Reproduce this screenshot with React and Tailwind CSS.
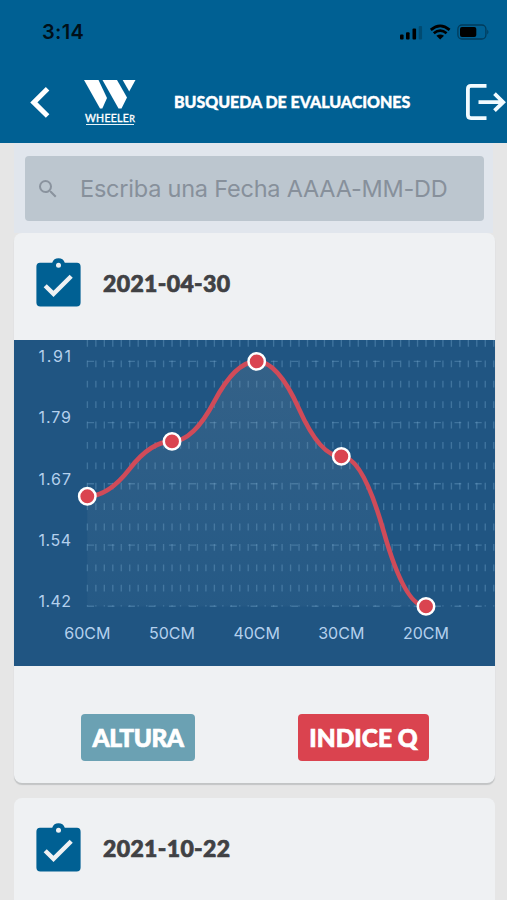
const POINTS = [
  { label: '60CM', x: 73.3, y: 156.3 },
  { label: '50CM', x: 158, y: 101.4 },
  { label: '40CM', x: 242.7, y: 21.4 },
  { label: '30CM', x: 327.3, y: 116.4 },
  { label: '20CM', x: 412, y: 266.4 },
];

const LEVELS = [
  { label: '1.91', y: 21.4 },
  { label: '1.79', y: 82.6 },
  { label: '1.67', y: 143.8 },
  { label: '1.54', y: 205.1 },
  { label: '1.42', y: 266.3 },
];

const VERTICALS = Array.from({ length: 49 }, (_, i) => 73.4 + i * 8.465);

// Each segment is two quadratic curves that meet halfway between the points.
function smoothPath(points) {
  let d = `M ${points[0].x} ${points[0].y}`;
  for (let i = 0; i < points.length - 1; i++) {
    const a = points[i];
    const b = points[i + 1];
    const mx = (a.x + b.x) / 2;
    const my = (a.y + b.y) / 2;
    d += ` Q ${(mx + a.x) / 2} ${a.y} ${mx} ${my} Q ${(mx + b.x) / 2} ${b.y} ${b.x} ${b.y}`;
  }
  return d;
}

function StatusIcons() {
  return (
    <svg className="h-6 w-[90px]" viewBox="0 0 90 24" fill="#000">
      <rect x="1" y="14.5" width="3.6" height="5" rx="1" />
      <rect x="7" y="12.2" width="3.6" height="7.3" rx="1" />
      <rect x="13.5" y="8.5" width="3.6" height="11" rx="1" />
      <rect x="19.7" y="6" width="3.4" height="13.5" rx="1" opacity=".22" />
      <path d="M41.2 19.6 L37.4 15.8 Q41.2 13 45 15.8 Z" />
      <path d="M34.8 13.3 Q41.2 8 47.6 13.3" fill="none" stroke="#000" strokeWidth="2.7" />
      <path d="M31.8 9.9 Q41.2 1.9 50.6 9.9" fill="none" stroke="#000" strokeWidth="2.7" />
      <rect x="58.9" y="5" width="28" height="14" rx="4" fill="none" stroke="#000" strokeOpacity=".38" strokeWidth="1.3" />
      <rect x="61" y="7.1" width="16.3" height="9.8" rx="2" />
      <path d="M88.3 9.4 Q90.6 11.9 88.3 14.4 Z" opacity=".4" />
    </svg>
  );
}

function Logo() {
  return (
    <div className="ml-[33px] mt-[8px] flex w-[52px] flex-col items-center">
      <svg className="h-[29px] w-[52px]" viewBox="0 0 52 29" fill="#fff">
        <path d="M0 0H14.5L23 18L18.3 28.5H16Z" />
        <path d="M18.5 0H33L43 17.5L37.5 28.5H34.5Z" />
        <path d="M38.7 0H51.5L45.2 11.5Z" />
      </svg>
      <div className="mt-[3px] flex h-[13px] w-[48px] justify-center border-b border-[#e6f4fc] text-[10.5px] leading-[12px] font-normal tracking-[0.3px] text-white [-webkit-text-stroke:0.35px_#fff] font-['Lato',sans-serif]">
        WHEELE<span className="text-[9px] leading-[14px]">R</span>
      </div>
    </div>
  );
}

function Header() {
  return (
    <header className="h-[143px] shrink-0 bg-[#006093]">
      <div className="flex h-[72px] items-start justify-between pt-5 pr-[18px] pl-[42px]">
        <div className="text-[20px] leading-6 font-semibold tracking-[0.35px] text-[#001019] font-['Inter',sans-serif]">3:14</div>
        <StatusIcons />
      </div>
      <div className="flex h-[70px] items-start">
        <svg className="mt-[15px] ml-[30px] h-[31px] w-5" viewBox="0 0 20 31" fill="none" stroke="#fff" strokeWidth="5">
          <path d="M17.6 1.8L3.8 15.4L17.6 29" />
        </svg>
        <div className="ml-px"><Logo /></div>
        <h1 className="mt-5 ml-[38px] w-[240px] text-[16px] leading-5 font-black tracking-[-0.03px] whitespace-nowrap text-white [-webkit-text-stroke:0.4px_#fff] font-['Lato',sans-serif]">
          BUSQUEDA DE EVALUACIONES
        </h1>
        <svg className="mt-[12px] ml-[52px] h-9 w-[41px]" viewBox="0 0 41 36" fill="none" stroke="#f2fbff" strokeWidth="3.8">
          <path d="M20.5 1.9H4.9Q1.9 1.9 1.9 4.9V31.1Q1.9 34.1 4.9 34.1H20.5" />
          <path d="M12.5 18.2H37M28.5 9.7L37.2 18.2L28.5 26.7" />
        </svg>
      </div>
    </header>
  );
}

function SearchBar() {
  return (
    <div className="mx-[14px] flex h-[90px] shrink-0 items-start bg-[#e1e6ed] pt-[13px] pl-[11px]">
      <div className="flex h-[65px] w-[459px] items-center rounded-[4px] bg-[#bcc6cf] pl-[11px]">
        <svg className="h-6 w-6" viewBox="0 0 24 24" fill="#8a939e">
          <path d="M15.5 14h-.79l-.28-.27A6.47 6.47 0 0 0 16 9.5 6.5 6.5 0 1 0 9.5 16c1.61 0 3.09-.59 4.23-1.57l.27.28v.79l5 4.99L20.49 19zm-6 0C7.01 14 5 11.99 5 9.5S7.01 5 9.5 5 14 7.01 14 9.5 11.99 14 9.5 14" />
        </svg>
        <span className="ml-5 text-[23.5px] leading-8 tracking-[-0.22px] whitespace-nowrap text-[#87909b] font-['Inter',sans-serif]">
          Escriba una Fecha AAAA-MM-DD
        </span>
      </div>
    </div>
  );
}

function CardTitle({ date }) {
  return (
    <div className="flex h-[107px] items-start pt-[25px] pl-[22px]">
      <svg className="h-[49px] w-[45px]" viewBox="0 0 45 49">
        <path fill="#006093" d="M4 4.7H16.2A6.7 6.7 0 0 1 28.8 4.7H41Q44.6 4.7 44.6 8.7V44.6Q44.6 48.6 40.6 48.6H4.4Q.4 48.6 .4 44.6V8.7Q.4 4.7 4 4.7Z" />
        <circle cx="22.5" cy="7.3" r="2.5" fill="#eff1f3" />
        <path d="M9.2 27.7L17.5 35.9L35.2 18.2" fill="none" stroke="#eff1f3" strokeWidth="4.4" />
      </svg>
      <h2 className="mt-[11px] ml-[22px] text-[23px] leading-7 font-black tracking-[0.35px] text-[#404144] [-webkit-text-stroke:0.7px_#404144] font-['Lato',sans-serif]">{date}</h2>
    </div>
  );
}

function Chart() {
  const curve = smoothPath(POINTS);
  return (
    <svg className="block h-[326px] w-[481px]" viewBox="0 0 481 326">
      <defs>
        <linearGradient id="area" x1="0" y1="21" x2="0" y2="266" gradientUnits="userSpaceOnUse">
          <stop offset="0" stopColor="#8c969f" stopOpacity=".19" />
          <stop offset="1" stopColor="#6d94b0" stopOpacity=".07" />
        </linearGradient>
      </defs>
      <rect width="481" height="326" fill="#205582" />
      <g stroke="#7fb0d6" strokeOpacity=".34" strokeWidth="1.36" strokeDasharray="6.8 13.6">
        {LEVELS.map((l) => (
          <line key={l.label} x1="73.3" x2="481" y1={l.y} y2={l.y} />
        ))}
        {VERTICALS.map((x) => (
          <line key={x} x1={x} x2={x} y1="0" y2="266.5" />
        ))}
      </g>
      <path d={`${curve} L 412 266.4 L 73.3 266.4 Z`} fill="url(#area)" />
      <path d={curve} fill="none" stroke="#d04b59" strokeWidth="4.6" />
      {POINTS.map((p) => (
        <circle key={p.label} cx={p.x} cy={p.y} r="8.2" fill="#da4450" stroke="#fff" strokeWidth="2.5" />
      ))}
      <g fill="#b4d0ed" fontFamily="Inter, sans-serif" fontSize="16">
        {LEVELS.map((l) => (
          <text key={l.label} x="57" y={l.y + 0.7} textAnchor="end" textLength="32.5">{l.label}</text>
        ))}
        {POINTS.map((p) => (
          <text key={p.label} x={p.x} y="299.3" textAnchor="middle">{p.label}</text>
        ))}
      </g>
    </svg>
  );
}

export default function App() {
  return (
    <div className="flex h-[900px] w-[507px] flex-col overflow-hidden bg-[#e6e6e6]">
      <Header />
      <SearchBar />
      <section className="mx-[14px] h-[550px] w-[481px] shrink-0 overflow-hidden rounded-[8px] bg-[#eff1f3] shadow-[0_2px_1px_#c2c4c5]">
        <CardTitle date="2021-04-30" />
        <Chart />
        <div className="flex items-start pt-[48px] pl-[67px]">
          <button className="h-[47px] w-[114px] rounded-[4px] bg-[#6ba1b3] text-[24.5px] leading-[46px] font-black tracking-[-0.5px] whitespace-nowrap text-white [-webkit-text-stroke:0.7px_#fff] font-['Lato',sans-serif]">
            ALTURA
          </button>
          <button className="ml-[103px] h-[47px] w-[131px] rounded-[4px] bg-[#da434f] text-[24.5px] leading-[46px] font-black tracking-[0px] whitespace-nowrap text-white [-webkit-text-stroke:0.7px_#fff] font-['Lato',sans-serif]">
            INDICE Q
          </button>
        </div>
      </section>
      <section className="mx-[14px] mt-[15px] h-[120px] w-[481px] shrink-0 rounded-t-[8px] bg-[#eff1f3]">
        <CardTitle date="2021-10-22" />
      </section>
    </div>
  );
}
